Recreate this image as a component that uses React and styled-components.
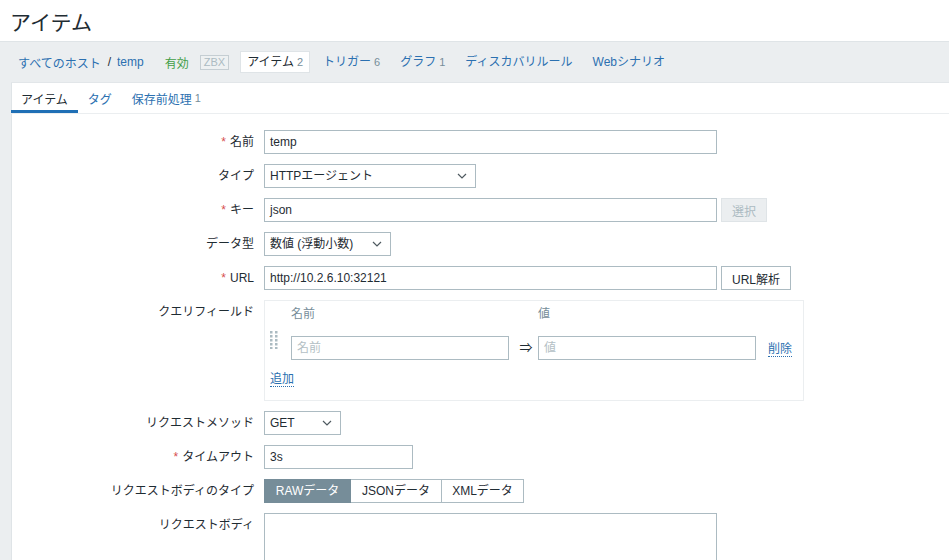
import React from "react";
import styled, { createGlobalStyle } from "styled-components";

const GlobalStyle = createGlobalStyle`
  html, body {
    margin: 0;
    padding: 0;
    background: #ffffff;
  }
  body {
    font-family: "Liberation Sans", Arial, "Noto Sans CJK JP", sans-serif;
    font-size: 12px;
    color: #1f2c33;
  }
  * {
    box-sizing: border-box;
  }
`;

const LINK = "#2b70b0";
const BORDER = "#acbbc2";

const Page = styled.div`
  display: flex;
  flex-direction: column;
  height: 100vh;
  overflow: hidden;
`;

const Header = styled.header`
  flex-shrink: 0;
  height: 42px;
  display: flex;
  align-items: center;
  padding-left: 10px;
  border-bottom: 1px solid #dfe4e7;
  background: #ffffff;
`;

const Title = styled.h1`
  margin: 0;
  font-size: 21px;
  font-weight: normal;
  color: #1f2c33;
`;

const Body = styled.div`
  flex: 1;
  min-height: 0;
  display: flex;
  flex-direction: column;
  background: #ebeef0;
  padding-left: 11px;
`;

const Nav = styled.nav`
  flex-shrink: 0;
  height: 41px;
  display: flex;
  align-items: center;
  gap: 6px;
  border-bottom: 1px solid #e2e6e9;
`;

const Crumbs = styled.div`
  display: flex;
  align-items: center;
  padding: 0 7px;
  margin-right: 1px;
`;

const Sep = styled.span`
  color: #1f2c33;
  margin: 0 6px 0 7px;
`;

const NavLink = styled.a`
  display: flex;
  align-items: baseline;
  height: 22px;
  line-height: ${(p) => (p.$active ? 20 : 22)}px;
  padding: 0 ${(p) => (p.$active ? 6 : 7)}px;
  color: ${(p) => (p.$active ? "#1f2c33" : LINK)};
  background: ${(p) => (p.$active ? "#ffffff" : "transparent")};
  border: ${(p) => (p.$active ? "1px solid #dfe4e7" : "none")};
  text-decoration: none;
  cursor: pointer;
`;

const Status = styled.span`
  color: #429e47;
  padding: 0 5px 0 7px;
`;

const Badge = styled.span`
  display: inline-block;
  height: 15px;
  line-height: 13px;
  padding: 0 3px;
  border: 1px solid #c5ced3;
  color: #acbbc2;
  font-size: 11px;
  background: #eef1f2;
  margin-right: 5px;
`;

const Count = styled.sup`
  vertical-align: baseline;
  font-size: 11px;
  color: #768d99;
  margin-left: 3px;
`;

const Panel = styled.main`
  flex: 1;
  background: #ffffff;
  border-left: 1px solid #dfe4e7;
`;

const Tabs = styled.div`
  display: flex;
  height: 31px;
  border-bottom: 1px solid #ebeef0;
  margin-left: -1px;
`;

const Tab = styled.div`
  display: flex;
  align-items: center;
  padding: 3px 10px 0;
  color: ${(p) => (p.$active ? "#1f2c33" : LINK)};
  border-bottom: 3px solid ${(p) => (p.$active ? "#1f6fb5" : "transparent")};
`;

const Form = styled.div`
  display: grid;
  grid-template-columns: 242px 1fr;
  column-gap: 10px;
  row-gap: 10px;
  padding-top: 16px;
  align-items: start;
`;

const Label = styled.label`
  text-align: right;
  padding-top: 5px;
  line-height: 14px;
  white-space: nowrap;
`;

const Req = styled.span`
  color: #d64e4e;
  margin-right: 4px;
`;

const Field = styled.div`
  display: flex;
  align-items: center;
  gap: 4px;
`;

const Input = styled.div`
  width: ${(p) => p.$w}px;
  height: 24px;
  line-height: 22px;
  padding: 0 5px;
  border: 1px solid ${BORDER};
  background: #ffffff;
  color: ${(p) => (p.$placeholder ? "#b4bfc5" : "#1f2c33")};
  white-space: nowrap;
  overflow: hidden;
`;

const Select = styled(Input)`
  display: flex;
  align-items: center;
  justify-content: space-between;
  padding-right: 8px;
`;

const Button = styled.button`
  height: 24px;
  padding: 0 10px;
  font: inherit;
  border: 1px solid ${(p) => (p.disabled ? "#dfe4e7" : BORDER)};
  background: ${(p) => (p.disabled ? "#ebeef0" : "#ffffff")};
  color: ${(p) => (p.disabled ? "#acbbc2" : "#1f2c33")};
`;

const QueryBox = styled.div`
  width: 540px;
  height: 101px;
  border: 1px solid #ebeef0;
  padding: 4px 4px 0 4px;
  display: grid;
  grid-template-columns: 22px 218px 29px 218px auto;
  grid-template-rows: 26px 29px auto;
  align-items: start;
`;

const ColHead = styled.div`
  padding-top: 2px;
  line-height: 14px;
  color: #768d99;
`;

const Handle = styled.div`
  padding-left: 1px;
  line-height: 0;
`;

const Cell = styled.div`
  padding-top: 5px;
`;

const Arrow = styled.div`
  padding: 5px 0 0 5px;
  height: 29px;
  line-height: 24px;
  text-align: center;
  font-size: 13px;
`;

const DotLink = styled.a`
  display: inline-block;
  color: ${LINK};
  line-height: 14px;
  border-bottom: 1px dotted ${LINK};
  cursor: pointer;
`;

const RemoveCell = styled.div`
  padding: 11px 0 0 12px;
`;

const AddCell = styled.div`
  grid-column: 1 / -1;
  padding-top: 12px;
  padding-left: 1px;
`;

const RadioGroup = styled.div`
  display: flex;
`;

const Radio = styled.div`
  height: 24px;
  line-height: 22px;
  width: ${(p) => p.$w}px;
  text-align: center;
  border: 1px solid ${(p) => (p.$on ? "#768d99" : BORDER)};
  border-left-width: ${(p) => (p.$first ? 1 : 0)}px;
  background: ${(p) => (p.$on ? "#768d99" : "#ffffff")};
  color: ${(p) => (p.$on ? "#ffffff" : "#1f2c33")};
`;

const TextArea = styled.div`
  width: 453px;
  height: 90px;
  border: 1px solid ${BORDER};
`;

const Chevron = () => (
  <svg width="10" height="6" viewBox="0 0 10 6">
    <polyline points="1,1 5,5 9,1" fill="none" stroke="#4f5a60" strokeWidth="1.2" />
  </svg>
);

const DragHandle = () => (
  <svg width="8" height="18" viewBox="0 0 8 18">
    {[0, 4, 8, 12, 16].map((y) =>
      [0, 5].map((x) => <rect key={`${x}-${y}`} x={x} y={y} width="2.5" height="2.5" fill="#acbbc2" />)
    )}
  </svg>
);

const Required = ({ children }) => (
  <Label>
    <Req>*</Req>
    {children}
  </Label>
);

export default function App() {
  return (
    <Page>
      <GlobalStyle />
      <Header>
        <Title>アイテム</Title>
      </Header>
      <Body>
        <Nav>
          <Crumbs>
            <span style={{ color: LINK }}>すべてのホスト</span>
            <Sep>/</Sep>
            <span style={{ color: LINK }}>temp</span>
          </Crumbs>
          <Status>有効</Status>
          <Badge>ZBX</Badge>
          <NavLink $active>
            アイテム<Count>2</Count>
          </NavLink>
          <NavLink>
            トリガー<Count>6</Count>
          </NavLink>
          <NavLink>
            グラフ<Count>1</Count>
          </NavLink>
          <NavLink>ディスカバリルール</NavLink>
          <NavLink>Webシナリオ</NavLink>
        </Nav>
        <Panel>
          <Tabs>
            <Tab $active>アイテム</Tab>
            <Tab>タグ</Tab>
            <Tab>
              保存前処理<Count>1</Count>
            </Tab>
          </Tabs>
          <Form>
            <Required>名前</Required>
            <Field>
              <Input $w={453}>temp</Input>
            </Field>

            <Label>タイプ</Label>
            <Field>
              <Select $w={212}>
                HTTPエージェント
                <Chevron />
              </Select>
            </Field>

            <Required>キー</Required>
            <Field>
              <Input $w={453}>json</Input>
              <Button disabled>選択</Button>
            </Field>

            <Label>データ型</Label>
            <Field>
              <Select $w={127}>
                数値 (浮動小数)
                <Chevron />
              </Select>
            </Field>

            <Required>URL</Required>
            <Field>
              <Input $w={453}>http://10.2.6.10:32121</Input>
              <Button>URL解析</Button>
            </Field>

            <Label>クエリフィールド</Label>
            <QueryBox>
              <div />
              <ColHead>名前</ColHead>
              <div />
              <ColHead>値</ColHead>
              <div />

              <Handle>
                <DragHandle />
              </Handle>
              <Cell>
                <Input $w={218} $placeholder>
                  名前
                </Input>
              </Cell>
              <Arrow>⇒</Arrow>
              <Cell>
                <Input $w={218} $placeholder>
                  値
                </Input>
              </Cell>
              <RemoveCell>
                <DotLink>削除</DotLink>
              </RemoveCell>

              <AddCell>
                <DotLink>追加</DotLink>
              </AddCell>
            </QueryBox>

            <Label>リクエストメソッド</Label>
            <Field>
              <Select $w={77}>
                GET
                <Chevron />
              </Select>
            </Field>

            <Required>タイムアウト</Required>
            <Field>
              <Input $w={149}>3s</Input>
            </Field>

            <Label>リクエストボディのタイプ</Label>
            <RadioGroup>
              <Radio $w={87} $on $first>
                RAWデータ
              </Radio>
              <Radio $w={91}>JSONデータ</Radio>
              <Radio $w={82}>XMLデータ</Radio>
            </RadioGroup>

            <Label>リクエストボディ</Label>
            <TextArea />
          </Form>
        </Panel>
      </Body>
    </Page>
  );
}
